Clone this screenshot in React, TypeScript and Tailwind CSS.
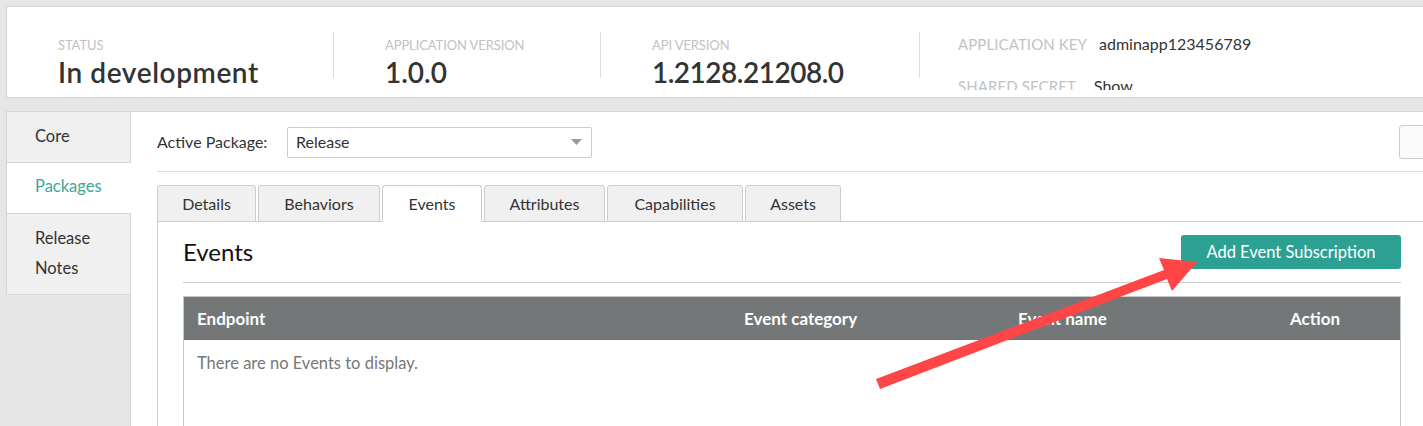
import React from "react";

const tabs = [
  { label: "Details", w: "w-[99px]" },
  { label: "Behaviors", w: "w-[122px]" },
  { label: "Events", w: "w-[100px]", active: true },
  { label: "Attributes", w: "w-[121px]" },
  { label: "Capabilities", w: "w-[136px]" },
  { label: "Assets", w: "w-[96px]" },
];

function Divider() {
  return <div className="w-px h-[46px] mt-[25px] bg-[#dcdcdc] shrink-0" />;
}

function Stat({
  label,
  value,
  w,
  track,
}: {
  label: string;
  value: string;
  w: string;
  track: string;
}) {
  return (
    <div className={`${w} shrink-0 pl-[51px] pt-[31px]`}>
      <div className="text-[13px] leading-[14px] uppercase tracking-[-0.1px] text-[#c2c2c2]">{label}</div>
      <div className={`mt-[6px] text-[28px] leading-[28px] font-semibold text-[#333] ${track}`}>{value}</div>
    </div>
  );
}

export default function App() {
  return (
    <div className="relative w-[1423px] h-[426px] overflow-hidden bg-[#e6e6e6] [font-family:Lato,'Liberation_Sans',sans-serif]">
      <div className="w-[1480px]">
        {/* Header */}
        <div className="ml-[6px] mt-[6px] h-[92px] bg-white border-y border-l border-[#d0d0d0] flex">
          <Stat label="Status" value="In development" w="w-[326px]" track="tracking-[0.6px]" />
          <Divider />
          <Stat label="Application Version" value="1.0.0" w="w-[266px]" track="tracking-[0px]" />
          <Divider />
          <Stat label="API Version" value="1.2128.21208.0" w="w-[318px]" track="tracking-[-0.5px]" />
          <Divider />
          <div className="pl-[38px] h-[83px] overflow-hidden">
            <div className="pt-[29px] flex items-baseline h-[45px] leading-[16px]">
              <span className="text-[15px] uppercase tracking-[0.1px] text-[#c2c2c2]">Application Key</span>
              <span className="ml-[12px] text-[16px] text-[#333]">adminapp123456789</span>
            </div>
            <div className="mt-[26px] flex items-baseline leading-[16px]">
              <span className="text-[15px] uppercase tracking-[0.1px] text-[#c2c2c2]">Shared Secret</span>
              <span className="ml-[18px] text-[16px] text-[#333]">Show</span>
            </div>
          </div>
        </div>

        {/* Body */}
        <div className="ml-[6px] mt-[13px] flex h-[330px]">
          {/* Sidebar */}
          <div className="w-[125px] shrink-0 border-r border-[#d6d6d6] flex flex-col text-[16.5px]">
            <div className="h-[52px] border-l border-t border-b border-[#d6d6d6] bg-[#f0f0f0] pl-[28px] flex items-center pb-[2px] text-[#333]">
              Core
            </div>
            <div className="h-[50px] border-l border-[#d6d6d6] bg-white pl-[28px] flex items-center pb-[3px] text-[#3aa89a] -mr-px">
              Packages
            </div>
            <div className="h-[82px] border-l border-t border-b border-[#d6d6d6] bg-[#f0f0f0] pl-[28px] flex items-center pb-[3px] text-[#333] leading-[30px]">
              <div>
                Release
                <br />
                Notes
              </div>
            </div>
          </div>

          {/* Main */}
          <div className="flex-1 bg-white border-t border-[#d6d6d6] pl-[26px] pr-[26px]">
            <div className="pt-[13px] flex items-center h-[47px]">
              <div className="w-[130px] text-[16px] text-[#333]">Active Package:</div>
              <div className="w-[305px] h-[31px] border border-[#ccc] rounded-[2px] flex items-center justify-between pl-[8px] pr-[9px] text-[16px] text-[#333]">
                <span>Release</span>
                <svg width="11" height="6" viewBox="0 0 11 6">
                  <path d="M0 0 L11 0 L5.5 6 Z" fill="#999" />
                </svg>
              </div>
              <div className="ml-auto w-[55px] h-[34px] border border-[#ccc] rounded-[3px] bg-[#fafafa]" />
            </div>
            <div className="mt-[12px] border-t border-[#dcdcdc]" />

            {/* Tabs */}
            <div className="mt-[13px] flex gap-[2px] -mb-px relative z-10">
              {tabs.map((t) => (
                <div
                  key={t.label}
                  className={`${t.w} h-[37px] border rounded-t-[3px] flex items-center justify-center text-[16px] text-[#333] ${
                    t.active ? "bg-white border-[#ccc] border-b-white" : "bg-[#f0f0f0] border-[#ccc]"
                  }`}
                >
                  {t.label}
                </div>
              ))}
            </div>

            {/* Tab panel */}
            <div className="w-[1270px] border-l border-t border-[#ccc] pl-[25px] pr-[26px] h-[220px]">
              <div className="pt-[13px] flex items-center justify-between h-[47px]">
                <div className="text-[24px] text-[#111]">Events</div>
                <div className="w-[220px] h-[34px] bg-[#2ca193] rounded-[3px] flex items-center justify-center text-[16.5px] text-white">
                  Add Event Subscription
                </div>
              </div>
              <div className="mt-[13px] border-t border-[#ccc]" />
              <div className="mt-[13px] border border-[#c8c8c8]">
                <div className="grid grid-cols-[548px_273px_272px_1fr] h-[43px] bg-[#737778] text-white font-bold text-[17px]">
                  <div className="pl-[13px] flex items-center">Endpoint</div>
                  <div className="pl-[12px] flex items-center">Event category</div>
                  <div className="pl-[13px] flex items-center">Event name</div>
                  <div className="pl-[13px] flex items-center">Action</div>
                </div>
                <div className="h-[120px] pt-[11px] pl-[13px] text-[16.5px] text-[#777]">
                  There are no Events to display.
                </div>
              </div>
            </div>
          </div>
        </div>
      </div>

      {/* Annotation arrow */}
      <svg
        className="absolute inset-0 pointer-events-none"
        width="1423"
        height="426"
        viewBox="0 0 1423 426"
      >
        <polygon
          points="876,379 1164,270 1159,258 1197,262 1172,291 1167,279 880,389"
          fill="#ff4545"
        />
      </svg>
    </div>
  );
}
